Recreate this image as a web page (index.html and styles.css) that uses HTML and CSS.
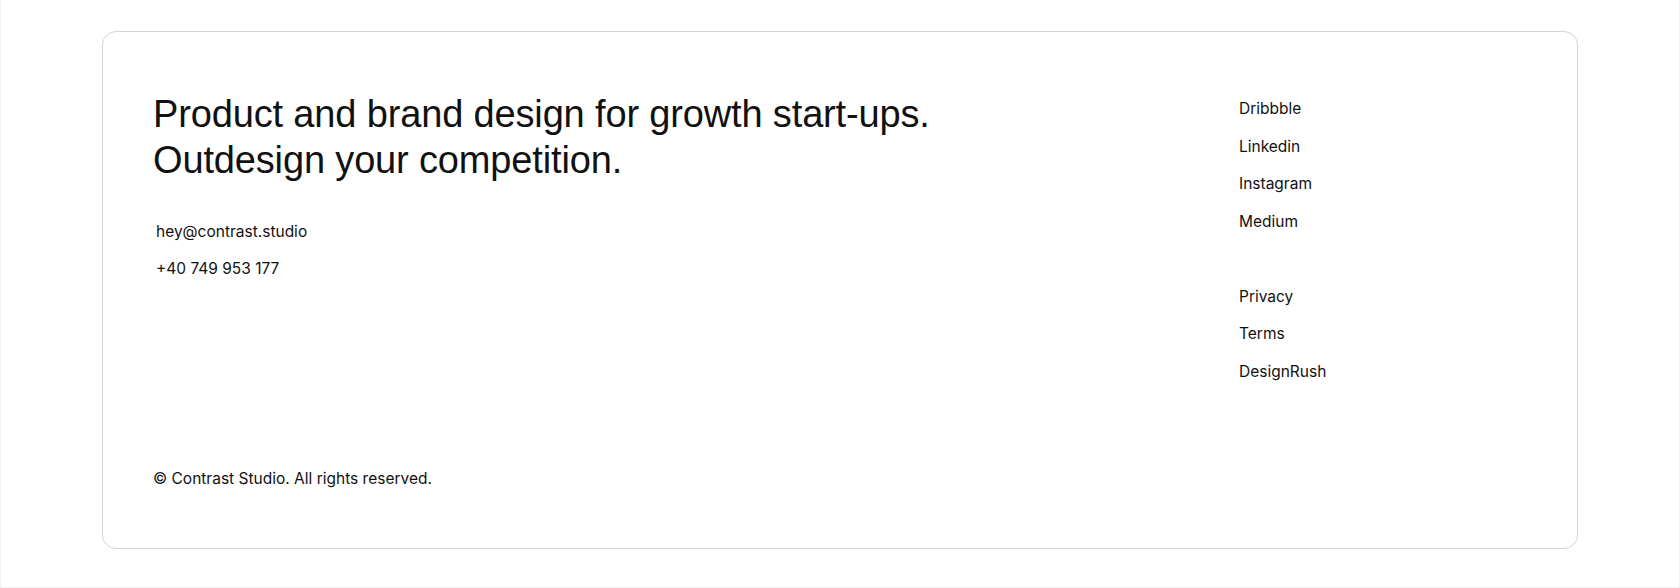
FILE: index.html
```html
<!DOCTYPE html>
<html lang="en">
<head>
<meta charset="utf-8">
<title>Contrast Studio</title>
<link rel="stylesheet" href="styles.css">
</head>
<body>
<div class="page">
  <footer class="card">
    <div class="top">
      <div class="intro">
        <h2 class="headline">Product and brand design for growth start-ups.<br>Outdesign your competition.</h2>
        <div class="contact">
          <a class="contact-link" href="#">hey@contrast.studio</a>
          <a class="contact-link" href="#">+40 749 953 177</a>
        </div>
      </div>
      <nav class="links">
        <ul class="link-group">
          <li><a href="#">Dribbble</a></li>
          <li><a href="#">Linkedin</a></li>
          <li><a href="#">Instagram</a></li>
          <li><a href="#">Medium</a></li>
        </ul>
        <ul class="link-group">
          <li><a href="#">Privacy</a></li>
          <li><a href="#">Terms</a></li>
          <li><a href="#">DesignRush</a></li>
        </ul>
      </nav>
    </div>
    <p class="copyright">© Contrast Studio. All rights reserved.</p>
  </footer>
</div>
</body>
</html>
```

FILE: styles.css
```css
* { box-sizing: border-box; }
html, body { margin: 0; padding: 0; background: #fff; }
body {
  font-family: Inter, "Liberation Sans", sans-serif;
  color: #111;
}
.page {
  height: 588px;
  padding: 31px 101px 39px;
  border-left: 1px solid #efefef;
  border-right: 1px solid #efefef;
  border-bottom: 1px solid #efefef;
}
.card {
  height: 518px;
  border: 1px solid #d4d4d4;
  border-radius: 14px;
  padding: 59px 50px 57px 50px;
  display: flex;
  flex-direction: column;
}
.top {
  display: grid;
  grid-template-columns: 1fr 288px;
}
.headline {
  margin: 0;
  font-family: "Liberation Sans", Arial, sans-serif;
  font-weight: 400;
  font-size: 38px;
  line-height: 46px;
  letter-spacing: -0.15px;
  color: #111;
}
.contact {
  display: flex;
  flex-direction: column;
  gap: 12.5px;
  margin-top: 37px;
  padding-left: 3px;
}
.contact-link, .links a {
  color: #111;
  text-decoration: none;
  font-size: 15.5px;
  line-height: 24px;
}
.links {
  padding-top: 5px;
  display: flex;
  flex-direction: column;
  gap: 50px;
}
.link-group {
  list-style: none;
  margin: 0;
  padding: 0;
  display: flex;
  flex-direction: column;
  gap: 12.5px;
}
.link-group li { line-height: 24px; }
.copyright {
  margin: auto 0 0 0;
  font-size: 15.5px;
  line-height: 24px;
}
```
